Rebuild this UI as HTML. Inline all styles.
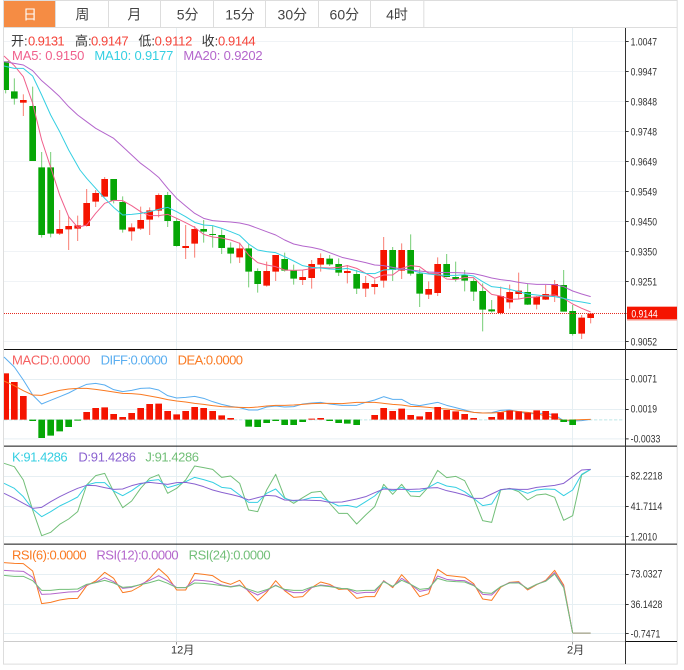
<!DOCTYPE html>
<html lang="zh"><head><meta charset="utf-8"><title>K线图</title>
<style>
html,body{margin:0;padding:0;background:#fff;width:684px;height:670px;overflow:hidden}
svg{display:block}
text{font-family:"Liberation Sans","Noto Sans CJK SC",sans-serif}
.t{font-size:42px;fill:#444;text-anchor:middle}
.l{font-size:39px}
.a{font-size:33px;fill:#333}
.w{fill:none;stroke-width:3;opacity:.55}
.b{fill:none;stroke-width:20}
.r{stroke:#f51400}
.g{stroke:#06a606}
polyline{fill:none;stroke-width:3;stroke-linejoin:round}
.ma5,.macd{stroke:#f0608c}
.ma10,.k{stroke:#35cfe2}
.ma20,.r12{stroke:#b466cc}
.diff{stroke:#5aaef0}
.dea,.r6{stroke:#fa7a22}
.d{stroke:#8a62d0}
.j,.r24{stroke:#72bf78}
.grid{stroke:#f0f3f6;stroke-width:3;fill:none}
.grid2{stroke:#e6eff3;stroke-width:3;fill:none}
.dk{stroke:#111;stroke-width:3;fill:none}
</style></head><body>
<svg xmlns="http://www.w3.org/2000/svg" width="684" height="670" viewBox="0 0 2052 2010">
<!-- frame -->
<path d="M10.500 1 V1992 M2031.500 1 V1992 M9 1.500H2033 M9 1992.500H2033 M9 82.500H2033" stroke="#ddd" stroke-width="3" fill="none"/>
<!-- tabs -->
<rect x="12" y="3" width="154" height="78" fill="#f58c44"/>
<path d="M166.500 3V81M325.500 3V81M481.500 3V81M640.500 3V81M796.500 3V81M955.500 3V81M1111.500 3V81M1271.500 3V81" stroke="#ddd" stroke-width="3" fill="none"/>
<text class="t" x="90" y="58" style="fill:#fff">日</text>
<text class="t" x="247" y="58">周</text>
<text class="t" x="403" y="58">月</text>
<text class="t" x="563" y="58">5分</text>
<text class="t" x="720" y="58">15分</text>
<text class="t" x="877" y="58">30分</text>
<text class="t" x="1033" y="58">60分</text>
<text class="t" x="1191" y="58">4时</text>

<!-- grids -->
<path class="grid" d="M12 124.500H1876M12 214.500H1876M12 304.500H1876M12 394.500H1876M12 484.500H1876M12 574.500H1876M12 664.500H1876M12 754.500H1876M12 844.500H1876M12 1024.500H1876"/>
<path class="grid2" d="M12 1138.500H1876M12 1228.500H1876M12 1316.500H1876M12 1429.500H1876M12 1519.500H1876M12 1609.500H1876M12 1723.500H1876M12 1813.500H1876M12 1900.500H1876"/>
<path class="grid2" d="M529.500 84V1933M1717.500 84V1933"/>

<!-- main candles top -->
<rect x="12" y="184" width="15" height="86" fill="#06a606"/>
<path class="w g" d="M17 270V280M43 235V314M98 260V483"/>
<path class="b g" d="M43 274V296M98 318V483"/>
<path class="w r" d="M70 283V348"/><path class="b r" d="M70 300V308"/>

<!-- main candles z3 -->
<g transform="translate(0,510)">
<path class="w r" d="M179 120V195M206 140V240M233 137V213M260 57V170M287 60V111M314 21V80M395 160V212M422 110V180M449 112V195M476 70V142M557 165V267M584 168V263M719 218V279M800 275V350M827 255V333M908 300V345M935 270V356M962 250V305"/>
<path class="b r" d="M179 177V191M206 168V178M233 166V176M260 99V168M287 69V95M314 27V80M395 172V184M422 150V176M449 121V149M476 75V122M557 228V234M584 177V221M719 235V262M800 303V347M827 255V305M908 321V330M935 282V324M962 264V284"/>
<path class="w g" d="M125 -54V203M152 -54V202M341 27V100M368 79V188M503 66V171M530 145V230M611 150V218M638 168V233M665 178V252M692 217V280M746 222V352M773 295V368M854 248V305M881 284V344M989 255V288M1016 265V318"/>
<path class="b g" d="M125 -8V195M152 -8V191M341 27V92M368 96V179M503 75V153M530 153V228M611 177V185M638 192V195M665 195V234M692 233V251M746 235V305M773 303V342M854 267V302M881 300V326M989 266V283M1016 282V308"/>
</g>
<!-- main candles z4 -->
<g transform="translate(1026,510)">
<path class="w r" d="M16 285V340M71 318V381M98 328V373M125 201V353M179 220V327M260 334V387M287 262V378M476 350V433M503 344V416M530 308V388M584 378V418M611 345V390M638 330V396M719 435V507M746 430V460"/>
<path class="b r" d="M16 303V309M71 339V356M98 342V351M125 240V332M179 240V302M260 357V374M287 282V369M476 378V429M503 366V397M530 362V372M584 380V404M611 372V389M638 342V378M719 443V491M746 431V444"/>
<path class="w g" d="M44 300V372M152 231V333M206 193V317M233 296V411M314 252V322M341 275V335M368 300V364M395 325V393M422 340V484M449 390V428M557 340V405M665 300V425M692 405V497"/>
<path class="b g" d="M44 312V356M152 240V300M206 240V311M233 311V371M314 282V321M341 321V327M368 315V332M395 333V365M422 363V419M449 418V424M557 366V404M665 345V425M692 423V492"/>
</g>

<!-- MA lines -->
<polyline class="ma5" points="12,168 30,185 43,197 70,230 98,310 125,420 152,502 179,585 206,650 233,682 260,675 287,640 314,610 341,601 368,602 395,617 422,635 449,647 476,647 503,643 530,655 557,668 584,682 611,703 638,711 665,714 692,720 719,730 746,765 773,788 800,795 827,800 854,810 881,811 908,810 935,806 962,803 989,804 1016,802 1042,797 1070,805 1097,820 1124,835 1151,825 1178,825 1205,805 1232,797 1259,800 1286,820 1313,820 1340,837 1367,839 1394,833 1421,833 1448,860 1475,883 1502,888 1529,898 1556,897 1583,892 1610,891 1637,886 1664,885 1691,895 1718,912 1745,925 1772,936"/>
<polyline class="ma10" points="12,198 43,205 70,205 98,228 125,285 152,345 179,395 206,450 240,510 260,535 287,565 314,595 341,622 368,645 395,643 422,640 449,635 476,628 503,622 530,635 557,650 584,667 611,675 638,677 665,685 692,695 719,706 746,732 773,750 800,755 827,758 854,770 881,783 908,797 935,802 962,804 989,807 1016,808 1042,805 1070,813 1097,820 1124,821 1151,810 1178,808 1205,807 1232,810 1259,818 1286,822 1313,825 1340,826 1367,826 1394,824 1421,828 1448,845 1475,860 1502,863 1529,868 1556,875 1583,882 1610,885 1637,888 1664,890 1691,895 1718,902 1745,906 1772,911"/>
<polyline class="ma20" points="12,185 43,190 70,195 98,212 125,242 152,265 179,290 206,320 233,345 260,365 287,385 314,400 341,415 368,440 395,465 422,490 449,510 476,532 503,565 530,595 557,618 584,640 611,655 638,662 665,664 692,666 719,669 746,675 773,685 800,695 827,705 854,720 881,732 908,738 935,742 962,748 989,758 1026,772 1070,782 1097,788 1124,795 1151,797 1178,802 1205,807 1232,810 1259,813 1286,816 1313,817 1340,818 1367,818 1394,819 1421,821 1448,827 1475,834 1502,839 1529,842 1556,847 1583,851 1610,853 1637,853 1664,854 1691,860 1718,873 1745,882 1772,890"/>

<!-- last price line -->
<path d="M12 940.500H1880" stroke="#e62a1e" stroke-width="3" stroke-dasharray="3 3" fill="none"/>

<!-- MACD -->
<g transform="translate(0,1035)">
<path d="M12 224.500H1870" stroke="#bfe6e6" stroke-width="3" stroke-dasharray="10 5" fill="none"/>
<rect x="12" y="85" width="15" height="139" fill="#f51400"/>
<path class="b r" d="M43 111V224M70 153V224M260 201V224M287 189V224M314 187V224M341 207V224M368 216V224M395 204V224M422 189V224M449 177V224M476 176V224M503 198V224M530 208V224M557 198V224M584 186V224M611 189V224M638 198V224M665 211V224M692 219V224M935 221V224M962 219V224"/>
<path class="b g" d="M98 224V228M125 224V279M152 224V272M179 224V259M206 224V246M233 224V227M746 224V245M773 224V246M800 224V234M827 224V228M854 224V240M881 224V240M908 224V231M989 224V228M1016 224V234"/>
<polyline class="diff" points="12,36 43,66 70,105 98,150 125,177 152,166 179,155 206,144 233,130 260,118 287,115 314,120 341,134 368,140 395,136 422,130 449,129 476,135 503,152 530,159 557,157 584,154 611,160 638,170 665,178 692,184 719,188 746,195 773,195 800,186 827,183 854,186 881,185 908,177 935,174 962,172 989,177 1026,181 1070,181 1097,172 1124,165 1151,155 1178,163 1205,163 1232,178 1259,182 1286,177 1313,172 1340,181 1367,188 1394,195 1421,202 1448,204 1475,203 1502,196 1529,195 1556,200 1583,207 1610,205 1637,205 1664,210 1691,227 1718,228 1745,227 1772,223"/>
<polyline class="dea" points="12,108 43,122 70,137 98,150 125,151 152,143 179,136 206,132 233,130 260,130 287,133 314,137 341,141 368,145 395,146 422,148 449,153 476,158 503,164 530,168 557,171 584,175 611,178 638,182 665,185 692,186 719,187 746,188 773,186 800,183 827,181 854,181 881,180 908,178 935,176 962,175 989,175 1026,176 1070,172 1097,172 1124,172 1151,175 1178,178 1205,180 1232,184 1259,185 1286,187 1313,190 1340,192 1367,195 1394,198 1421,202 1448,204 1475,204 1502,202 1529,197 1556,200 1583,202 1610,206 1637,213 1664,219 1691,226 1718,225 1745,224 1772,223"/>
</g>
<g transform="translate(1026,1035)">
<path class="b r" d="M98 210V224M125 189V224M152 198V224M179 191V224M206 210V224M233 214V224M260 201V224M287 186V224M314 195V224M341 199V224M368 207V224M395 219V224M449 216V224M476 202V224M503 197V224M530 199V224M557 203V224M584 196V224M611 198V224M638 205V224"/>
<path class="b g" d="M16 224V236M44 224V240M665 224V231M692 224V240"/>
</g>

<!-- KDJ -->
<g transform="translate(0,1335)">
<polyline class="j" points="12,55 43,65 70,105 98,195 125,272 152,262 179,238 206,222 233,200 260,120 287,92 314,85 341,140 368,188 395,168 422,130 449,100 476,89 503,145 530,130 557,105 584,63 611,68 638,73 665,97 692,93 719,115 746,195 773,200 800,135 827,88 854,158 881,175 908,158 935,142 962,139 989,175 1016,205 1042,205 1070,237 1097,210 1124,185 1151,118 1178,148 1205,118 1232,153 1259,155 1286,125 1313,76 1340,98 1367,94 1394,107 1421,160 1448,227 1475,232 1502,135 1529,130 1556,140 1583,165 1610,150 1637,147 1664,157 1691,226 1718,212 1745,90 1772,73"/>
<polyline class="k" points="12,115 43,130 70,155 98,192 125,215 152,200 179,183 206,170 233,156 260,120 287,113 314,113 341,138 368,152 395,137 422,118 449,107 476,104 503,128 530,120 557,110 584,97 611,104 638,112 665,127 692,130 719,150 746,172 773,172 800,145 827,132 854,160 881,168 908,165 935,158 962,157 989,170 1016,183 1042,181 1070,187 1097,170 1124,153 1151,127 1178,138 1205,127 1232,140 1259,140 1286,127 1313,112 1340,123 1367,127 1394,140 1421,160 1448,182 1475,177 1502,134 1529,132 1556,135 1583,145 1610,135 1637,132 1664,133 1691,152 1718,135 1745,88 1772,73"/>
<polyline class="d" points="12,145 43,160 70,175 98,190 125,187 152,170 179,155 206,142 233,130 260,121 287,122 314,128 341,133 368,132 395,122 422,115 449,112 476,115 503,118 530,113 557,112 584,117 611,125 638,135 665,142 692,148 719,155 746,165 773,158 800,151 827,153 854,165 881,166 908,165 935,166 962,167 989,172 1026,171 1070,162 1097,155 1124,143 1151,132 1178,133 1205,133 1232,133 1259,132 1286,129 1313,128 1340,137 1367,143 1394,150 1421,160 1448,160 1475,147 1502,134 1529,131 1556,133 1583,133 1610,127 1637,124 1664,121 1691,115 1718,95 1745,75 1772,73"/>
</g>

<!-- RSI -->
<g transform="translate(0,1635)">
<polyline class="r6" points="12,53 43,55 70,56 98,78 125,176 152,172 179,165 206,161 233,160 260,122 287,108 314,82 341,100 368,143 395,138 422,123 449,100 476,71 503,95 530,135 557,135 584,85 611,88 638,92 665,110 692,118 719,106 746,140 773,168 800,142 827,107 854,137 881,157 908,155 935,128 962,111 989,118 1016,133 1042,132 1070,160 1097,155 1124,155 1151,107 1178,128 1205,89 1232,118 1259,155 1286,146 1313,73 1340,91 1367,94 1394,97 1421,116 1448,162 1475,166 1502,127 1529,112 1556,110 1583,135 1610,119 1637,106 1664,76 1691,120 1718,264"/>
<polyline class="r12" points="12,76 43,78 70,79 98,97 125,148 152,147 179,144 206,141 233,140 260,120 287,112 314,98 341,110 368,130 395,127 422,118 449,106 476,92 503,107 530,128 557,128 584,105 611,107 638,110 665,120 692,125 719,120 746,137 773,150 800,137 827,120 854,135 881,143 908,143 935,128 962,120 989,123 1026,131 1042,131 1070,145 1097,142 1124,142 1151,108 1178,125 1205,100 1232,118 1259,139 1286,134 1313,93 1340,103 1367,106 1394,107 1421,120 1448,148 1475,150 1502,125 1529,113 1556,112 1583,132 1610,118 1637,108 1664,83 1691,125 1718,264"/>
<polyline class="r24" points="12,91 43,94 70,94 98,107 125,136 152,136 179,133 206,133 233,132 260,118 287,113 314,106 341,114 368,127 395,125 422,119 449,113 476,105 503,115 530,128 557,128 584,114 611,115 638,118 665,122 692,126 719,122 746,133 773,142 800,134 827,122 854,133 881,136 908,136 935,126 962,122 989,125 1026,131 1042,131 1070,138 1097,136 1124,136 1151,110 1178,124 1205,106 1232,118 1259,133 1286,130 1313,100 1340,108 1367,110 1394,111 1421,122 1448,143 1475,145 1502,125 1529,114 1556,114 1583,131 1610,118 1637,109 1664,87 1691,128 1718,264"/>
<path d="M1718 264.500H1772" stroke="#b4b4a0" stroke-width="5" fill="none"/>
</g>

<!-- separators + axis -->
<path class="dk" d="M12 1048.500H2031M12 1338.500H2031M12 1632.500H2031"/>
<path d="M12 1924.500H1876" stroke="#ccc" stroke-width="3" fill="none"/>
<path class="dk" d="M1876 1924.500H2031"/>
<path d="M1876.500 84V1992" stroke="#333" stroke-width="3" fill="none"/>
<path d="M529.500 1926V1934M1717.500 1926V1934" stroke="#999" stroke-width="3" fill="none"/>
<path d="M1876 124.500h10M1876 214.500h10M1876 304.500h10M1876 394.500h10M1876 484.500h10M1876 574.500h10M1876 664.500h10M1876 754.500h10M1876 844.500h10M1876 1024.500h10M1876 1138.500h10M1876 1228.500h10M1876 1316.500h10M1876 1429.500h10M1876 1519.500h10M1876 1609.500h10M1876 1723.500h10M1876 1813.500h10M1876 1900.500h10" stroke="#333" stroke-width="3" fill="none"/>

<!-- price tag -->
<rect x="1881" y="920" width="150" height="38" fill="#f51400"/>
<rect x="1881" y="958" width="150" height="4" fill="#f9a9a0"/>

<!-- axis labels -->
<g class="a">
<text class="a" x="1892" y="136" textLength="79" lengthAdjust="spacingAndGlyphs">1.0047</text>
<text class="a" x="1892" y="226" textLength="79" lengthAdjust="spacingAndGlyphs">0.9947</text>
<text class="a" x="1892" y="316" textLength="79" lengthAdjust="spacingAndGlyphs">0.9848</text>
<text class="a" x="1892" y="406" textLength="79" lengthAdjust="spacingAndGlyphs">0.9748</text>
<text class="a" x="1892" y="496" textLength="79" lengthAdjust="spacingAndGlyphs">0.9649</text>
<text class="a" x="1892" y="586" textLength="79" lengthAdjust="spacingAndGlyphs">0.9549</text>
<text class="a" x="1892" y="676" textLength="79" lengthAdjust="spacingAndGlyphs">0.9450</text>
<text class="a" x="1892" y="766" textLength="79" lengthAdjust="spacingAndGlyphs">0.9350</text>
<text class="a" x="1892" y="856" textLength="79" lengthAdjust="spacingAndGlyphs">0.9251</text>
<text class="a" x="1894" y="952" textLength="79" lengthAdjust="spacingAndGlyphs" style="fill:#fff">0.9144</text>
<text class="a" x="1892" y="1036" textLength="79" lengthAdjust="spacingAndGlyphs">0.9052</text>
<text class="a" x="1892" y="1148" textLength="79" lengthAdjust="spacingAndGlyphs">0.0071</text>
<text class="a" x="1892" y="1238" textLength="79" lengthAdjust="spacingAndGlyphs">0.0019</text>
<text class="a" x="1892" y="1327" textLength="89" lengthAdjust="spacingAndGlyphs">-0.0033</text>
<text class="a" x="1892" y="1439" textLength="95" lengthAdjust="spacingAndGlyphs">82.2218</text>
<text class="a" x="1892" y="1530" textLength="95" lengthAdjust="spacingAndGlyphs">41.7114</text>
<text class="a" x="1892" y="1621" textLength="79" lengthAdjust="spacingAndGlyphs">1.2010</text>
<text class="a" x="1892" y="1733" textLength="95" lengthAdjust="spacingAndGlyphs">73.0327</text>
<text class="a" x="1892" y="1824" textLength="95" lengthAdjust="spacingAndGlyphs">36.1428</text>
<text class="a" x="1892" y="1913" textLength="89" lengthAdjust="spacingAndGlyphs">-0.7471</text>
<text class="a" x="513" y="1960">12月</text>
<text class="a" x="1701" y="1960">2月</text>
</g>

<!-- legends -->
<text class="l" x="33" y="137" fill="#333">开:</text>
<text class="l" x="84" y="137" fill="#f5443a" textLength="110">0.9131</text>
<text class="l" x="225" y="137" fill="#333">高:</text>
<text class="l" x="273" y="137" fill="#f5443a" textLength="113">0.9147</text>
<text class="l" x="415" y="137" fill="#333">低:</text>
<text class="l" x="464" y="137" fill="#f5443a" textLength="113">0.9112</text>
<text class="l" x="605" y="137" fill="#333">收:</text>
<text class="l" x="654" y="137" fill="#f5443a" textLength="113">0.9144</text>
<text class="l" x="36" y="180" fill="#f0608c" textLength="217">MA5: 0.9150</text>
<text class="l" x="283" y="180" fill="#35cfe2" textLength="237">MA10: 0.9177</text>
<text class="l" x="550" y="180" fill="#b466cc" textLength="238">MA20: 0.9202</text>
<text class="l" x="36" y="1093" fill="#f55f5f" textLength="235">MACD:0.0000</text>
<text class="l" x="302" y="1093" fill="#5aaef0" textLength="201">DIFF:0.0000</text>
<text class="l" x="533" y="1093" fill="#fa7a22" textLength="196">DEA:0.0000</text>
<text class="l" x="36" y="1385" fill="#35cfe2" textLength="167">K:91.4286</text>
<text class="l" x="235" y="1385" fill="#8a62d0" textLength="173">D:91.4286</text>
<text class="l" x="436" y="1385" fill="#72bf78" textLength="161">J:91.4286</text>
<text class="l" x="36" y="1678" fill="#fa7a22" textLength="224">RSI(6):0.0000</text>
<text class="l" x="289" y="1678" fill="#b466cc" textLength="247">RSI(12):0.0000</text>
<text class="l" x="566" y="1678" fill="#72bf78" textLength="246">RSI(24):0.0000</text>
</svg>
</body></html>
